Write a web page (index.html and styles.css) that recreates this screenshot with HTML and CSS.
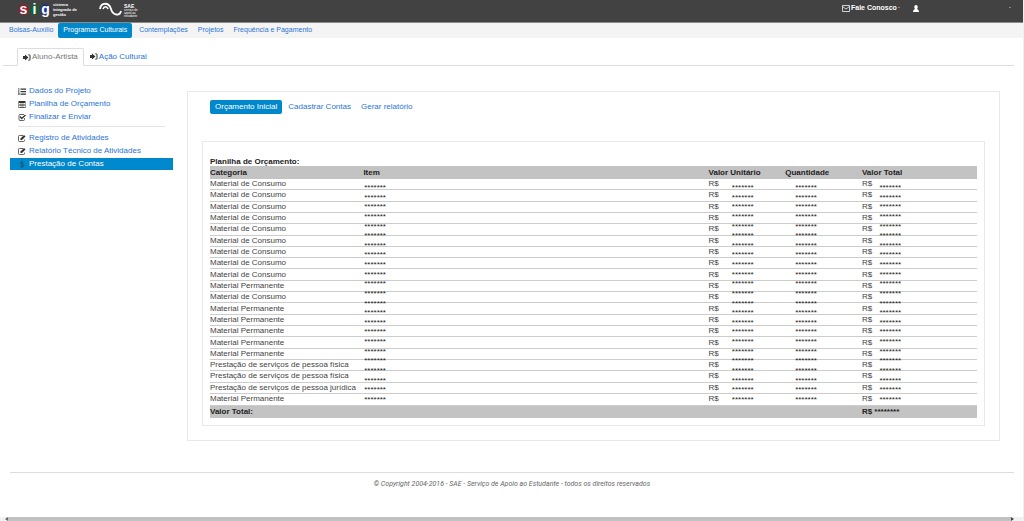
FILE: index.html
```html
<!DOCTYPE html>
<html lang="pt-BR">
<head>
<meta charset="utf-8">
<title>SIG - Prestação de Contas</title>
<link rel="stylesheet" href="styles.css">
</head>
<body>
<svg class="defs" aria-hidden="true">
  <symbol id="enter" viewBox="0 0 16 14"><path d="M0 4h4V1l7 6-7 6v-3H0z"/><path d="M10 1h3q2 0 2 2v8q0 2-2 2h-3v-1.500h3V2.500h-3z"/></symbol>
  <symbol id="list" viewBox="0 0 16 14"><path d="M5 1h11v2.500H5zM5 6h11v2.500H5zM5 11h11v2.500H5zM1 0h1.500v4H1zM0 5h3v1.500L1.500 8H3v1H0V8l1.500-1.500H0zM0 10h3v4H0v-1h2v-.5H1v-1h1V11H0z"/></symbol>
  <symbol id="table" viewBox="0 0 16 14"><path fill-rule="evenodd" d="M1 0h14v14H1zM2 4v2h3.500V4zm4.500 0v2h3V4zm4 0v2H14V4zM2 7v2h3.500V7zm4.500 0v2h3V7zm4 0v2H14V7zM2 10v2.500h3.500V10zm4.500 0v2.500h3V10zm4 0v2.500H14V10z"/></symbol>
  <symbol id="check" viewBox="0 0 16 14"><path fill="none" stroke="currentColor" stroke-width="1.500" d="M13 8v3q0 2-2 2H4q-2 0-2-2V3q0-2 2-2h8"/><path fill="none" stroke="currentColor" stroke-width="2.500" d="M4 5l3.500 4L15 2"/></symbol>
  <symbol id="edit" viewBox="0 0 16 14"><path fill="none" stroke="currentColor" stroke-width="1.500" d="M13 9v2q0 2-2 2H3q-2 0-2-2V3q0-2 2-2h7"/><path d="M5 7l7-7 3 3-7 7H5z"/></symbol>
  <symbol id="dollar" viewBox="0 0 16 14"><path fill="none" stroke="currentColor" stroke-width="2" d="M11.500 4Q10 2.500 8 2.500 5 2.500 5 4.700 5 6.500 8 7q3.500.5 3.500 2.500T8 11.700Q6 11.700 4.500 10M8 0v14"/></symbol>
  <symbol id="mail" viewBox="0 0 16 14"><path fill="none" stroke="currentColor" stroke-width="1.500" d="M1 1h14v12H1zM1 3l7 5 7-5"/></symbol>
  <symbol id="user" viewBox="0 0 16 14"><path d="M8 0q3.500 0 3.500 4 0 2.500-1.500 4 4 .5 4 6H2q0-5.500 4-6-1.500-1.500-1.500-4Q4.500 0 8 0z"/></symbol>
</svg>

<header class="topbar">
  <div class="brand">
    <span class="sig"><b class="sig-s">s</b><b class="sig-i">i</b><b class="sig-g">g</b></span>
    <span class="tagline">sistema<br>integrado de<br>gestão</span>
  </div>
  <div class="sae">
    <svg class="wave" viewBox="0 0 24 14" aria-hidden="true"><path fill="none" stroke="#fff" stroke-width="1.800" d="M1 7C2 0 10 0 12 7s9 7 10 2"/><path fill="none" stroke="#fff" stroke-width="1.500" d="M4 7c1-3 4-3 5 0"/></svg>
    <span class="sae-text"><b>SAE</b><span>serviço de<br>apoio ao<br>estudante</span></span>
  </div>
  <button class="contact"><svg class="icon"><use href="#mail"/></svg>Fale Conosco<i class="caret"></i></button>
  <button class="account" aria-label="Usuário"><svg class="icon"><use href="#user"/></svg><i class="caret"></i></button>
</header>

<nav class="mainnav">
  <a href="#">Bolsas-Auxílio</a>
  <a href="#" class="active">Programas Culturais</a>
  <a href="#">Contemplações</a>
  <a href="#">Projetos</a>
  <a href="#">Frequência e Pagamento</a>
</nav>

<nav class="tabs">
  <a href="#" class="active"><svg class="icon"><use href="#enter"/></svg>Aluno-Artista</a>
  <a href="#"><svg class="icon"><use href="#enter"/></svg>Ação Cultural</a>
</nav>

<main class="layout">
  <nav class="sidebar">
    <a href="#"><svg class="icon"><use href="#list"/></svg>Dados do Projeto</a>
    <a href="#"><svg class="icon"><use href="#table"/></svg>Planilha de Orçamento</a>
    <a href="#"><svg class="icon"><use href="#check"/></svg>Finalizar e Enviar</a>
    <hr>
    <a href="#"><svg class="icon"><use href="#edit"/></svg>Registro de Atividades</a>
    <a href="#"><svg class="icon"><use href="#edit"/></svg>Relatório Técnico de Atividades</a>
    <a href="#" class="active"><svg class="icon"><use href="#dollar"/></svg>Prestação de Contas</a>
  </nav>
  <section class="panel">
    <nav class="pills">
      <a href="#" class="active">Orçamento Inicial</a>
      <a href="#">Cadastrar Contas</a>
      <a href="#">Gerar relatório</a>
    </nav>
    <div class="sheet">
      <h1>Planilha de Orçamento:</h1>
      <div class="budget-wrap">
        <table class="budget">
          <colgroup><col class="c-cat"><col class="c-item"><col class="c-num"><col class="c-num"><col class="c-total"></colgroup>
          <thead><tr><th>Categoria</th><th>Item</th><th>Valor Unitário</th><th>Quantidade</th><th>Valor Total</th></tr></thead>
          <tbody id="rows"></tbody>
          <tfoot><tr><td colspan="4">Valor Total:</td><td>R$ ********</td></tr></tfoot>
        </table>
        <div class="masks" id="masks"></div>
      </div>
    </div>
  </section>
</main>

<footer class="footer">© Copyright 2004-2016 - SAE - Serviço de Apoio ao Estudante - todos os direitos reservados</footer>
<div class="scrollbar"><i class="arrow left"></i><i class="thumb"></i><i class="arrow right"></i></div>
<script src="app.js"></script>
</body>
</html>
```
FILE: styles.css
```css
* { box-sizing: border-box; }
body {
  margin: 0;
  min-height: 100vh;
  display: flex;
  flex-direction: column;
  font: 8px/10px "Liberation Sans", Arial, sans-serif;
  color: #444;
  background: #fff;
  border-right: 1px solid #eee;
}
a { color: #2b74d8; text-decoration: none; white-space: nowrap; }
.defs { display: none; }
.icon { width: 8px; height: 7px; fill: currentColor; flex: none; }
.active { color: #fff; background: #08c; }

.topbar {
  display: flex;
  align-items: flex-start;
  height: 23px;
  padding: 1px 12px 0 18px;
  background: #424242;
  border-bottom: 1px solid #8a8a8a;
  color: #fff;
}
.brand { display: flex; gap: 2px; width: 81px; padding-top: 2px; }
.sig { display: flex; font-size: 14px; line-height: 12px; }
.sig b { width: 11px; height: 13px; text-align: center; }
.sig-s { background: radial-gradient(#d4142c, #a01828 40%, #424242 75%); }
.sig-i { background: radial-gradient(#128040, #185c38 40%, #424242 75%); }
.sig-g { background: radial-gradient(#1838b8, #182c80 40%, #424242 75%); }
.tagline { font-size: 4px; line-height: 5px; font-weight: bold; margin-top: -1px; }
.sae { display: flex; gap: 1px; flex: 1; padding-top: 1px; }
.wave { width: 24px; height: 14px; }
.sae-text { display: flex; flex-direction: column; font-size: 3px; line-height: 3px; padding-top: 2px; }
.sae-text b { font-size: 5px; line-height: 5px; }
.topbar button {
  display: flex;
  align-items: center;
  gap: 1px;
  height: 14px;
  padding: 0;
  border: 0;
  background: none;
  color: #fff;
  font: bold 7px/14px "Liberation Sans", Arial, sans-serif;
}
.caret { border: 1px solid transparent; border-top-color: #ccc; }
.contact { width: 70px; }
.topbar .account { width: 99px; justify-content: space-between; }

.mainnav {
  display: flex;
  gap: 4px;
  height: 15px;
  padding-left: 6px;
  background: #f4f4f4;
  font-size: 7px;
  line-height: 14px;
}
.mainnav a { padding: 0 3px; }
.mainnav .active { margin-left: -2px; padding: 0 5px; border-radius: 2px; }

.tabs {
  display: flex;
  height: 18px;
  margin: 10px 9px 0 3px;
  padding-left: 14px;
  border-bottom: 1px solid #ddd;
}
.tabs a { display: flex; align-items: center; gap: 1px; padding: 0 5px; border: 1px solid transparent; }
.tabs .active {
  background: #fff;
  color: #777;
  border-color: #ddd #ddd #fff;
  border-radius: 2px 2px 0 0;
  margin-bottom: -1px;
}
.tabs .icon, .sidebar .icon { color: #333; }

.layout {
  display: grid;
  grid-template-columns: 163px 1fr;
  gap: 14px;
  align-items: start;
  padding: 19px 23px 0 10px;
}
.sidebar a { display: flex; align-items: center; gap: 3px; height: 12px; padding-left: 8px; margin-bottom: 1px; }
.sidebar .active { color: #fff; margin-bottom: 0; }
.sidebar .active .icon { color: #24576e; }
.sidebar hr { margin: 3px 8px 5px; border: 0; border-top: 1px solid #e4e4e4; }
.panel { margin-top: 6px; padding: 8px 14px 14px; border: 1px solid #e8e8e8; }
.pills { display: flex; gap: 2px; padding-left: 8px; line-height: 14px; }
.pills a { padding: 0 4px; }
.pills .active { padding: 0 5px; border-radius: 2px; }
.sheet { margin-top: 27px; padding: 15px 7px 7px; border: 1px solid #e8e8e8; }
.sheet h1 { margin: 0; font-size: 8px; line-height: 9px; color: #222; }
.budget-wrap { position: relative; }
.budget { width: 100%; height: 252px; table-layout: fixed; border-collapse: collapse; }
.c-cat { width: 20%; }
.c-item { width: 45%; }
.c-num { width: 10%; }
.c-total { width: 15%; }
.budget th, .budget td { padding: 0; text-align: left; white-space: nowrap; }
.budget th, .budget tfoot td { height: 13px; background: #c3c3c3; color: #222; font-weight: bold; }
.budget tbody td { border-bottom: 1px solid #ccc; }

/* Redaction columns laid over the table body */
.masks {
  position: absolute;
  inset: 18px 0 14px 1px;
  display: grid;
  grid-template-columns: 20% 48% 8% 11% 13%;
  font-size: 8px;
  line-height: 8px;
  color: #222;
}
.masks div { display: flex; flex-direction: column; justify-content: space-between; }
.masks div:nth-child(n+4) { padding-left: 2px; }

.footer {
  margin: 31px 9px 0 10px;
  padding-top: 6px;
  border-top: 1px solid #ddd;
  text-align: center;
  font-family: Roboto, "Liberation Sans", sans-serif;
  font-size: 7px;
  font-style: italic;
  color: #666;
}
.scrollbar { display: flex; align-items: center; height: 4px; margin-top: auto; background: #f1f1f1; }
.thumb { flex: 1; height: 4px; background: #c1c1c1; }
.arrow { width: 8px; height: 4px; border: 2px solid transparent; }
.right { width: 12px; }
.left { border-right: 3px solid #666; }
.right { border-left: 3px solid #444; }
```
FILE: app.js
```js
const consumo = "Material de Consumo";
const permanente = "Material Permanente";
const categories = [
  ...Array(9).fill(consumo), permanente, consumo, ...Array(5).fill(permanente),
  "Prestação de serviços de pessoa física",
  "Prestação de serviços de pessoa física",
  "Prestação de serviços de pessoa jurídica",
  permanente
];
document.getElementById("rows").innerHTML = categories
  .map(c => `<tr><td>${c}</td><td></td><td>R$</td><td></td><td>R$</td></tr>`)
  .join("");

const column = `<div>${"<span>*******</span>".repeat(23)}</div>`;
document.getElementById("masks").innerHTML = "<div></div>" + column.repeat(4);
```
